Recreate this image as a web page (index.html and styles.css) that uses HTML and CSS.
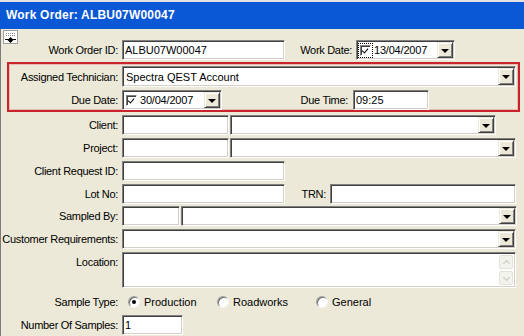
FILE: index.html
```html
<!DOCTYPE html>
<html>
<head>
<meta charset="utf-8">
<title>Work Order</title>
<link rel="stylesheet" href="styles.css">
</head>
<body>
<div class="window">
  <div class="titlebar">Work Order: ALBU07W00047</div>
  <div class="panel">
    <span class="pin-btn">
      <svg width="15" height="14" viewBox="0 0 15 14">
        <rect x="0.5" y="0.5" width="14" height="13" fill="#fff" stroke="#a0a0a0"/>
        <path d="M3 3.5h9M3 5.5h9" stroke="#8c8c8c" stroke-dasharray="1 1"/>
        <path d="M2 9.5h11" stroke="#000"/>
        <path d="M4.5 10 L10.5 10 L7.5 13 Z" fill="#000"/>
        <path d="M5.5 9 L9.5 9 L7.5 7 Z" fill="#000"/>
      </svg>
    </span>

    <div class="row row-first">
      <span class="lbl">Work Order ID:</span>
      <div class="field text w163">ALBU07W00047</div>
      <span class="lbl lbl-workdate">Work Date:</span>
      <div class="field date w99">
        <span class="check focus"></span>
        <span class="val">13/04/2007</span>
        <span class="dd-btn"><i class="arrow"></i></span>
      </div>
    </div>

    <div class="highlight">
      <div class="row row-tech">
        <span class="lbl lbl-in">Assigned Technician:</span>
        <div class="field combo w394 h21">
          <span class="val">Spectra QEST Account</span>
          <span class="dd-btn"><i class="arrow"></i></span>
        </div>
      </div>
      <div class="row row-due">
        <span class="lbl lbl-in">Due Date:</span>
        <div class="field date w100">
          <span class="check"></span>
          <span class="val">30/04/2007</span>
          <span class="dd-btn"><i class="arrow"></i></span>
        </div>
        <span class="lbl lbl-duetime">Due Time:</span>
        <div class="field text w76">09:25</div>
      </div>
    </div>

    <div class="row">
      <span class="lbl">Client:</span>
      <div class="field text w107"></div>
      <div class="field combo w266 gap1">
        <span class="val"></span>
        <span class="dd-btn"><i class="arrow"></i></span>
      </div>
    </div>

    <div class="row">
      <span class="lbl">Project:</span>
      <div class="field text w107"></div>
      <div class="field combo w286 gap1">
        <span class="val"></span>
        <span class="dd-btn"><i class="arrow"></i></span>
      </div>
    </div>

    <div class="row">
      <span class="lbl">Client Request ID:</span>
      <div class="field text w163"></div>
    </div>

    <div class="row">
      <span class="lbl">Lot No:</span>
      <div class="field text w163"></div>
      <span class="lbl lbl-trn">TRN:</span>
      <div class="field text w186"></div>
    </div>

    <div class="row row-tight">
      <span class="lbl">Sampled By:</span>
      <div class="field text w58"></div>
      <div class="field combo w336 gap1">
        <span class="val"></span>
        <span class="dd-btn"><i class="arrow"></i></span>
      </div>
    </div>

    <div class="row">
      <span class="lbl">Customer Requirements:</span>
      <div class="field combo w394">
        <span class="val"></span>
        <span class="dd-btn"><i class="arrow"></i></span>
      </div>
    </div>

    <div class="row row-location">
      <span class="lbl lbl-top">Location:</span>
      <div class="field memo w394">
        <span class="val"></span>
        <span class="vscroll">
          <span class="sb-btn"><i class="chev up"></i></span>
          <span class="sb-track"></span>
          <span class="sb-btn"><i class="chev down"></i></span>
        </span>
      </div>
    </div>

    <div class="row row-radios">
      <span class="lbl">Sample Type:</span>
      <div class="radios">
        <span class="opt opt1"><span class="radio on"></span>Production</span>
        <span class="opt opt2"><span class="radio"></span>Roadworks</span>
        <span class="opt opt3"><span class="radio"></span>General</span>
      </div>
    </div>

    <div class="row">
      <span class="lbl">Number Of Samples:</span>
      <div class="field text w61">1</div>
    </div>
  </div>
</div>
</body>
</html>
```

FILE: styles.css
```css
html, body {
  margin: 0;
  padding: 0;
  background: #ece9d8;
  overflow: hidden;
}

body {
  width: 524px;
  height: 336px;
  font-family: "Liberation Sans", Arial, sans-serif;
  font-size: 11px;
  color: #000;
}

.window {
  width: 524px;
  height: 336px;
}

.titlebar {
  border-top: 2px solid #e3e3e3;
  height: 27px;
  line-height: 27px;
  background: #0a58d6;
  color: #fff;
  font-weight: bold;
  font-size: 12px;
  letter-spacing: 0.2px;
  padding-left: 6px;
}

.panel {
  position: relative;
  border-left: 1px solid #7c7c7c;
  height: 307px;
  padding-top: 11px;
  box-sizing: border-box;
}

.pin-btn {
  position: absolute;
  left: 2px;
  top: 1px;
  width: 15px;
  height: 14px;
  display: block;
}

.pin-btn svg {
  display: block;
}

.row {
  display: flex;
  align-items: center;
  height: 20px;
  margin-top: 3px;
}

.row-first {
  margin-top: 0;
}

.row-tight {
  margin-top: 2px;
}

/* red highlight group */
.highlight {
  margin-top: 2px;
  margin-left: 6px;
  width: 513px;
  height: 50px;
  box-sizing: border-box;
  border: 2px solid #c9232b;
  box-shadow: inset 0 0 0 1px #e9b9b4;
}

.row-tech {
  margin-top: 2px;
  height: 21px;
}

.row-due {
  margin-top: 3px;
}

.lbl {
  flex: none;
  width: 117px;
  margin-right: 4px;
  text-align: right;
  letter-spacing: -0.3px;
  white-space: nowrap;
}

.lbl-in {
  width: 109px;
}

.lbl-workdate {
  width: 67px;
  margin-right: 4px;
}

.lbl-duetime {
  width: 126px;
  margin-right: 5px;
}

.lbl-trn {
  width: 41px;
  margin-right: 4px;
}

.lbl-top {
  align-self: flex-start;
  padding-top: 4px;
}

/* fields */
.field {
  flex: none;
  box-sizing: border-box;
  height: 20px;
  background: #fff;
  border: 1px solid;
  border-color: #808080 #ffffff #ffffff #808080;
  box-shadow: inset 1px 1px #404040, inset -1px -1px #d4d0c8;
  display: flex;
  align-items: center;
  white-space: nowrap;
  overflow: hidden;
}

.field.h21 {
  height: 21px;
}

.field.text {
  padding-left: 2px;
}

.gap1 { margin-left: 1px; }

.w58 { width: 58px; }
.w61 { width: 61px; }
.w76 { width: 76px; }
.w99 { width: 99px; }
.w100 { width: 100px; }
.w107 { width: 107px; }
.w163 { width: 163px; }
.w186 { width: 186px; }
.w266 { width: 266px; }
.w286 { width: 286px; }
.w336 { width: 336px; }
.w394 { width: 394px; }

.val {
  flex: 1;
  padding-left: 3px;
}

.combo {
  padding: 1px;
}

.combo .val {
  padding-left: 2px;
}

.dd-btn {
  flex: none;
  width: 16px;
  height: 16px;
  box-sizing: border-box;
  background: #ece9d8;
  border: 1px solid;
  border-color: #ece9d8 #404040 #404040 #ece9d8;
  box-shadow: inset 1px 1px #ffffff, inset -1px -1px #808080;
  display: flex;
  align-items: center;
  justify-content: center;
}

.h21 .dd-btn {
  height: 17px;
}

.arrow {
  display: block;
  width: 0;
  height: 0;
  border-left: 4px solid transparent;
  border-right: 4px solid transparent;
  border-top: 4px solid #000;
  margin-top: 1px;
}

/* date pickers */
.date {
  padding: 1px 1px 1px 3px;
}

.date .val {
  padding-left: 3px;
  letter-spacing: -0.2px;
}

.check {
  flex: none;
  position: relative;
  width: 11px;
  height: 11px;
  box-sizing: border-box;
  background: #fff;
  border: 1px solid;
  border-color: #808080 #ffffff #ffffff #808080;
  box-shadow: inset 1px 1px #404040;
}

.check::after {
  content: "";
  position: absolute;
  left: 2px;
  top: 1px;
  width: 3px;
  height: 5px;
  border-right: 1.5px solid #000;
  border-bottom: 1.5px solid #000;
  transform: rotate(40deg);
}

.check.focus {
  outline: 1px dotted #000;
  outline-offset: 1px;
}

/* memo */
.row-location {
  height: 36px;
}

.memo {
  height: 36px;
  padding: 2px;
  align-items: stretch;
}

.vscroll {
  flex: none;
  width: 14px;
  display: flex;
  flex-direction: column;
  background: #fbfbf9;
}

.sb-btn {
  flex: none;
  height: 14px;
  box-sizing: border-box;
  border: 1px solid #e4e2da;
  border-radius: 2px;
  background: #f3f3ee;
  display: flex;
  align-items: center;
  justify-content: center;
}

.sb-track {
  flex: 1;
}

.chev {
  display: block;
  width: 4px;
  height: 4px;
  border-left: 1.5px solid #c8c6bd;
  border-top: 1.5px solid #c8c6bd;
}

.chev.up {
  transform: rotate(45deg);
  margin-top: 2px;
}

.chev.down {
  transform: rotate(225deg);
  margin-top: -2px;
}

/* radios */
.row-radios {
  margin-top: 4px;
}

.radios {
  display: flex;
  align-items: center;
  padding-left: 6px;
}

.opt {
  display: flex;
  align-items: center;
  flex: none;
}

.opt1 { width: 89px; }
.opt2 { width: 99px; }

.radio {
  flex: none;
  position: relative;
  width: 12px;
  height: 12px;
  box-sizing: border-box;
  border-radius: 50%;
  background: #fff;
  border: 1px solid;
  border-color: #9c9c9c #f4f4f4 #f4f4f4 #9c9c9c;
  box-shadow: inset 1px 1px #6a6a6a;
  margin-right: 4px;
}

.radio.on::after {
  content: "";
  position: absolute;
  left: 3px;
  top: 3px;
  width: 4px;
  height: 4px;
  border-radius: 50%;
  background: #000;
}
```
